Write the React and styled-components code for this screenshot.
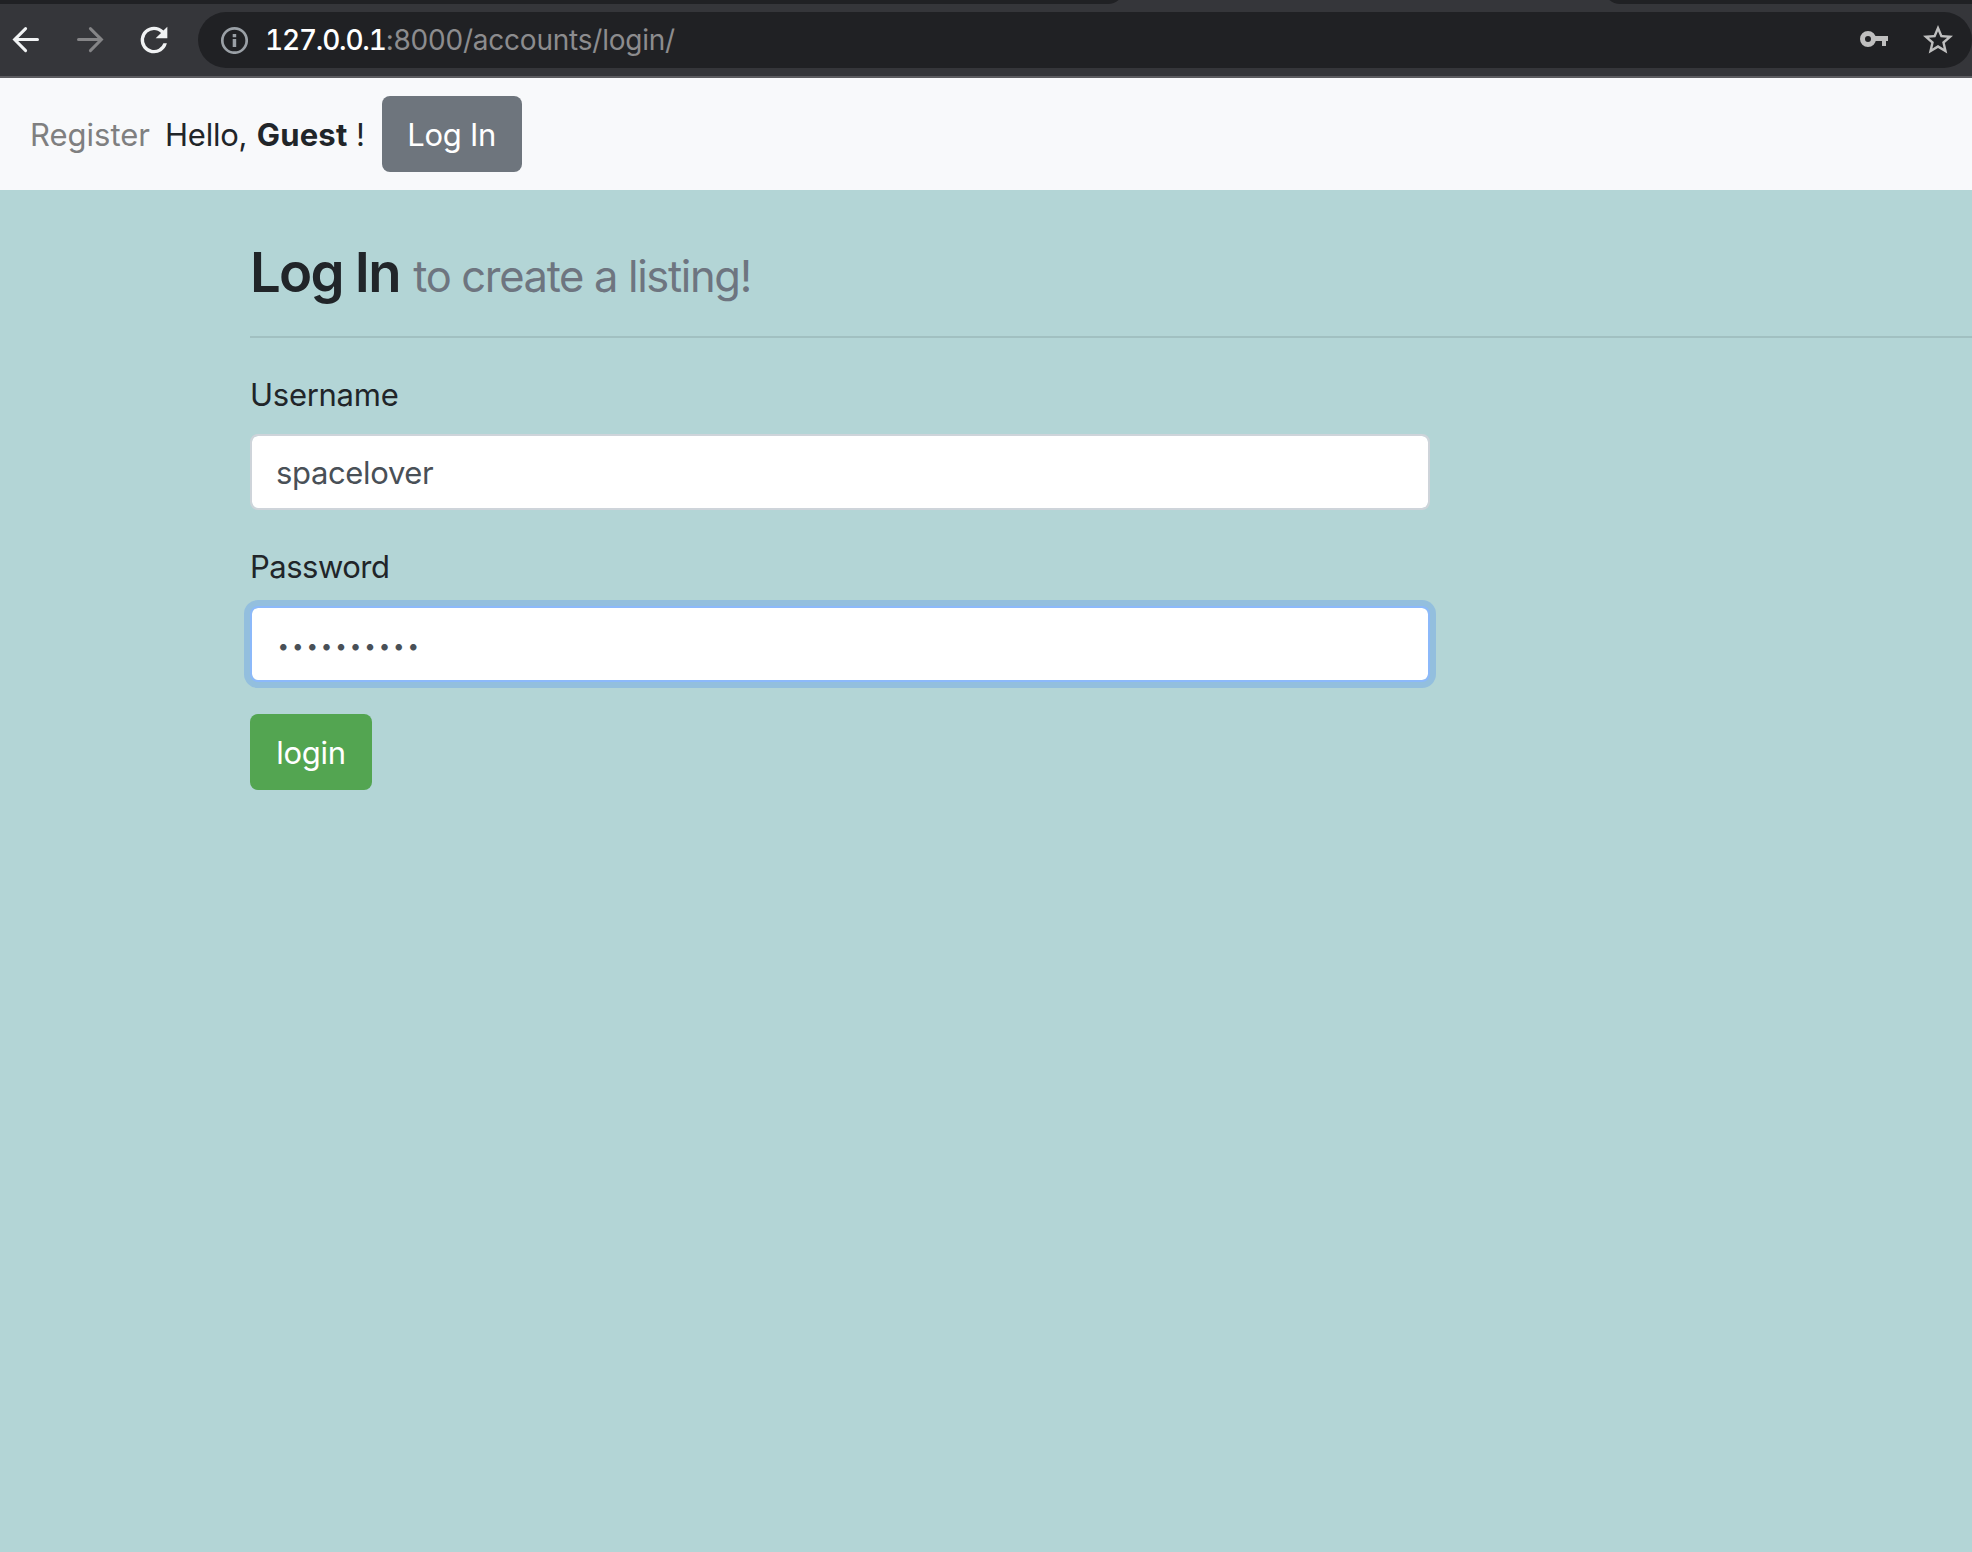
import React from "react";
import styled, { createGlobalStyle, css } from "styled-components";

const GlobalStyle = createGlobalStyle`
  *, *::before, *::after { box-sizing: border-box; }
  body {
    margin: 0;
    background: #b3d5d6;
    color: #212529;
    font: 400 31px/48px Inter, "Liberation Sans", sans-serif;
    overflow: hidden;
  }
`;

const Window = styled.div`
  display: flex;
  flex-direction: column;
  min-height: 100vh;
`;

const TabStrip = styled.div`
  display: flex;
  align-items: flex-end;
  justify-content: space-between;
  height: 4px;
  overflow: hidden;
  background: #35363a;
`;

const InactiveTabs = styled.div`
  flex: none;
  width: ${(p) => p.$width}px;
  height: 20px;
  background: #202124;
  border-radius: ${(p) => (p.$side === "left" ? "0 0 16px 0" : "0 0 0 16px")};
`;

const Toolbar = styled.div`
  display: flex;
  align-items: center;
  height: 74px;
  padding: 0 0 2px 12px;
  background: #35363a;
  border-bottom: 2px solid #5c5c60;
`;

const ToolButton = styled.button`
  display: flex;
  flex: none;
  padding: 0;
  margin: 2px ${(p) => p.$gap}px 0 0;
  border: 0;
  background: none;
  color: ${(p) => (p.$disabled ? "#858587" : "#f1f3f4")};
`;

const AddressBar = styled.div`
  display: flex;
  flex: 1;
  align-items: center;
  height: 56px;
  margin-top: 2px;
  padding: 0 16px 0 22px;
  border-radius: 28px;
  background: #202124;
  color: #bfbfbf;
`;

const InfoSlot = styled.span`
  display: flex;
  margin-right: 17px;
  color: #9aa0a6;
`;

const Url = styled.div`
  flex: 1;
  font-size: 28px;
  line-height: 56px;
  letter-spacing: -0.22px;
  color: #8c8c8e;
`;

const Host = styled.span`
  color: #ffffff;
  letter-spacing: -1.2px;
  font-weight: 500;
  font-variant-numeric: tabular-nums;
`;

const KeySlot = styled.span`
  display: flex;
  margin: 0 32px 2px 0;
`;

const Navbar = styled.nav`
  display: flex;
  align-items: center;
  height: 112px;
  padding-left: 30px;
  background: #f8f9fb;
`;

const NavLink = styled.a`
  margin-right: 15px;
  padding-top: 2px;
  color: #7f7f80;
`;

const Greeting = styled.span`
  margin-right: 17px;
  padding-top: 2px;
  letter-spacing: -0.25px;
  white-space: pre;
`;

const UserName = styled.strong`
  margin-left: 1px;
  font-weight: 700;
  letter-spacing: 0.22px;
`;

const Button = styled.button`
  width: ${(p) => p.$width}px;
  height: 76px;
  padding: 2px 0 0;
  border: 0;
  border-radius: 8px;
  background: ${(p) => (p.$tone === "success" ? "#53a551" : "#6e757d")};
  color: #ffffff;
  font: inherit;
  letter-spacing: -0.3px;
`;

const Main = styled.main`
  padding: 48px 0 0 250px;
`;

const Heading = styled.h1`
  margin: 0;
  height: 66px;
  padding-top: 1px;
  font-size: 54.5px;
  font-weight: 600;
  line-height: 67px;
  letter-spacing: -1.75px;
  white-space: nowrap;
`;

const Muted = styled.small`
  margin-left: 1.5px;
  font-size: 43.5px;
  font-weight: 400;
  letter-spacing: -1.35px;
  color: #6e7580;
`;

const Divider = styled.hr`
  height: 2px;
  margin: 32px 0;
  border: 0;
  background: #a1c0c1;
`;

const Field = styled.div`
  display: flex;
  flex-direction: column;
  gap: 16px;
  width: 1180px;
  margin-bottom: 32px;
`;

const Label = styled.label`
  height: 48px;
  padding-top: 1px;
  letter-spacing: ${(p) => p.$tracking}px;
`;

const Input = styled.input`
  width: 100%;
  height: 76px;
  padding: 0 24px;
  border: 2px solid #ced4da;
  border-radius: 8px;
  outline: none;
  background: #ffffff;
  background-clip: padding-box;
  color: #495057;
  font: inherit;
  letter-spacing: -0.35px;
  ${(p) =>
    p.$active &&
    css`
      border-color: #8cb9fa;
      box-shadow: 0 0 0 6px #93bfde;
    `}
  &[type="password"] {
    padding: 2px 24px 0 25.5px;
    font-size: 20.5px;
    letter-spacing: 2.92px;
  }
`;

const ArrowIcon = ({ flip }) => (
  <svg width="28" height="28" viewBox="0 0 28 28" fill="none" stroke="currentColor" strokeWidth="3" strokeLinecap="round" strokeLinejoin="miter">
    <path
      transform={flip ? "matrix(-1 0 0 1 28 0)" : undefined}
      d="M13.6 2.6 2.6 13.6 13.6 24.6M3 13.6H25.5"
    />
  </svg>
);

const ReloadIcon = () => (
  <svg width="40" height="40" viewBox="0 0 24 24" fill="currentColor">
    <path d="M17.65 6.35A7.96 7.96 0 0 0 12 4a8 8 0 1 0 7.73 10h-2.08A6 6 0 1 1 12 6c1.66 0 3.14.69 4.22 1.78L13 11h7V4l-2.35 2.35z" />
  </svg>
);

const InfoIcon = () => (
  <svg width="28" height="28" viewBox="0 0 28 28">
    <circle cx="14.5" cy="14.5" r="12.2" fill="none" stroke="currentColor" strokeWidth="2.7" />
    <path fill="currentColor" d="M12.7 7.9h3.5v3.3h-3.5zM12.7 13h3.5v8h-3.5z" />
  </svg>
);

const KeyIcon = () => (
  <svg width="28" height="16" viewBox="0 0 28 16">
    <circle cx="8" cy="8" r="5.5" fill="none" stroke="currentColor" strokeWidth="5" />
    <path fill="currentColor" d="M14 5h14v5h-2v5h-4v-5h-8z" />
  </svg>
);

const StarIcon = () => (
  <svg width="36" height="36" viewBox="0 0 24 24" fill="currentColor">
    <path d="m22 9.24-7.19-.62L12 2 9.19 8.63 2 9.24l5.46 4.73L5.82 21 12 17.27 18.18 21l-1.63-7.03L22 9.24zM12 15.4l-3.76 2.27 1-4.28-3.32-2.88 4.38-.38L12 6.1l1.71 4.04 4.38.38-3.32 2.88 1 4.28L12 15.4z" />
  </svg>
);

export default function App() {
  return (
    <Window>
      <GlobalStyle />
      <TabStrip>
        <InactiveTabs $width={1124} $side="left" />
        <InactiveTabs $width={368} $side="right" />
      </TabStrip>
      <Toolbar>
        <ToolButton $gap={36} aria-label="Back"><ArrowIcon /></ToolButton>
        <ToolButton $gap={30} $disabled aria-label="Forward"><ArrowIcon flip /></ToolButton>
        <ToolButton $gap={24} aria-label="Reload"><ReloadIcon /></ToolButton>
        <AddressBar>
          <InfoSlot><InfoIcon /></InfoSlot>
          <Url><Host>127.0.0.1</Host>:8000/accounts/login/</Url>
          <KeySlot><KeyIcon /></KeySlot>
          <StarIcon />
        </AddressBar>
      </Toolbar>
      <Navbar>
        <NavLink>Register</NavLink>
        <Greeting>Hello, <UserName>Guest</UserName> !</Greeting>
        <Button $width={140}>Log In</Button>
      </Navbar>
      <Main>
        <Heading>Log In <Muted>to create a listing!</Muted></Heading>
        <Divider />
        <Field>
          <Label htmlFor="username" $tracking={-0.27}>Username</Label>
          <Input id="username" type="text" defaultValue="spacelover" />
        </Field>
        <Field>
          <Label htmlFor="password" $tracking={-0.5}>Password</Label>
          <Input id="password" type="password" defaultValue="0123456789" $active />
        </Field>
        <Button $width={122} $tone="success">login</Button>
      </Main>
    </Window>
  );
}
